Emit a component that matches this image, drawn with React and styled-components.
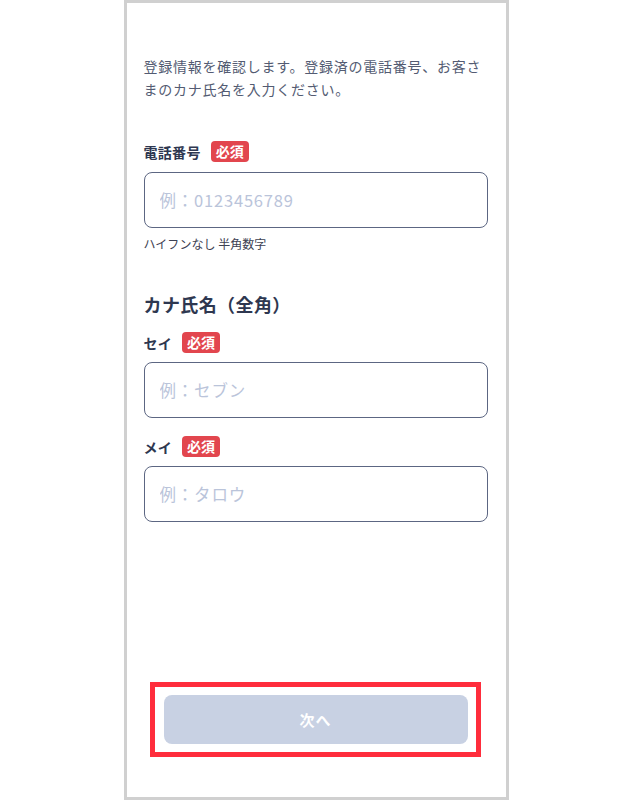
import React from "react";
import styled, { createGlobalStyle } from "styled-components";

const Global = createGlobalStyle`
  html, body { margin: 0; padding: 0; background: #ffffff; }
  body { font-family: "Noto Sans CJK JP", "Noto Sans", sans-serif; }
  * { box-sizing: border-box; }
`;

const Page = styled.div`
  width: 632px;
  height: 800px;
  display: flex;
  justify-content: center;
`;

const Frame = styled.div`
  width: 385px;
  height: 800px;
  border: 3px solid #d0d0d0;
  background: #ffffff;
  display: flex;
  flex-direction: column;
  padding: 52px 18px 40px 17px;
`;

const Intro = styled.p`
  margin: 0 0 40px;
  font-size: 14px;
  letter-spacing: 0.75px;
  line-height: 23px;
  color: #535b72;
`;

const Field = styled.div`
  display: flex;
  flex-direction: column;
  gap: ${(p) => p.$gap || 9}px;
  margin-top: ${(p) => p.$top || 0}px;
`;

const LabelRow = styled.div`
  display: flex;
  align-items: center;
  gap: 10px;
  height: 21px;
`;

const Label = styled.label`
  font-size: 14px;
  font-weight: 700;
  letter-spacing: 0.3px;
  color: #2e3750;
`;

const Badge = styled.span`
  display: inline-block;
  height: 21px;
  line-height: 21px;
  padding: 0 5px;
  border-radius: 4px;
  background: #e2464e;
  color: #ffffff;
  font-size: 14px;
  font-weight: 700;
`;

const Input = styled.input`
  width: 100%;
  height: 56px;
  border: 1px solid #5c6682;
  border-radius: 8px;
  padding: 0 15px;
  background: #ffffff;
  font-family: "Noto Sans CJK JP", sans-serif;
  font-size: 16.5px;
  letter-spacing: 0.8px;
  color: #2e3750;
  outline: none;
  &::placeholder {
    color: #bac4da;
  }
`;

const Hint = styled.div`
  margin-top: -3px;
  font-size: 12px;
  line-height: 18px;
  color: #3d4152;
`;

const SectionTitle = styled.h2`
  margin: 38px 0 0;
  font-size: 18px;
  line-height: 26px;
  font-weight: 700;
  letter-spacing: 0.4px;
  color: #2e3750;
`;

const Footer = styled.div`
  margin-top: auto;
  align-self: center;
  border: 5px solid #ff2d3c;
  padding: 8px 8.5px;
`;

const NextButton = styled.button`
  display: block;
  width: 304px;
  height: 49px;
  border: none;
  border-radius: 8px;
  background: #c8d1e3;
  color: #ffffff;
  font-family: "Noto Sans CJK JP", sans-serif;
  font-size: 15px;
  font-weight: 700;
  letter-spacing: 1px;
`;

function FormField({ label, placeholder, top, gap }) {
  return (
    <Field $top={top} $gap={gap}>
      <LabelRow>
        <Label>{label}</Label>
        <Badge>必須</Badge>
      </LabelRow>
      <Input placeholder={placeholder} />
    </Field>
  );
}

export default function App() {
  return (
    <Page>
      <Global />
      <Frame>
        <Intro>
          登録情報を確認します。登録済の電話番号、お客さまのカナ氏名を入力ください。
        </Intro>
        <Field $gap={10}>
          <LabelRow>
            <Label>電話番号</Label>
            <Badge>必須</Badge>
          </LabelRow>
          <Input placeholder="例：0123456789" />
          <Hint>ハイフンなし 半角数字</Hint>
        </Field>
        <SectionTitle>カナ氏名（全角）</SectionTitle>
        <FormField label="セイ" placeholder="例：セブン" top={15} />
        <FormField label="メイ" placeholder="例：タロウ" top={18} />
        <Footer>
          <NextButton disabled>次へ</NextButton>
        </Footer>
      </Frame>
    </Page>
  );
}
